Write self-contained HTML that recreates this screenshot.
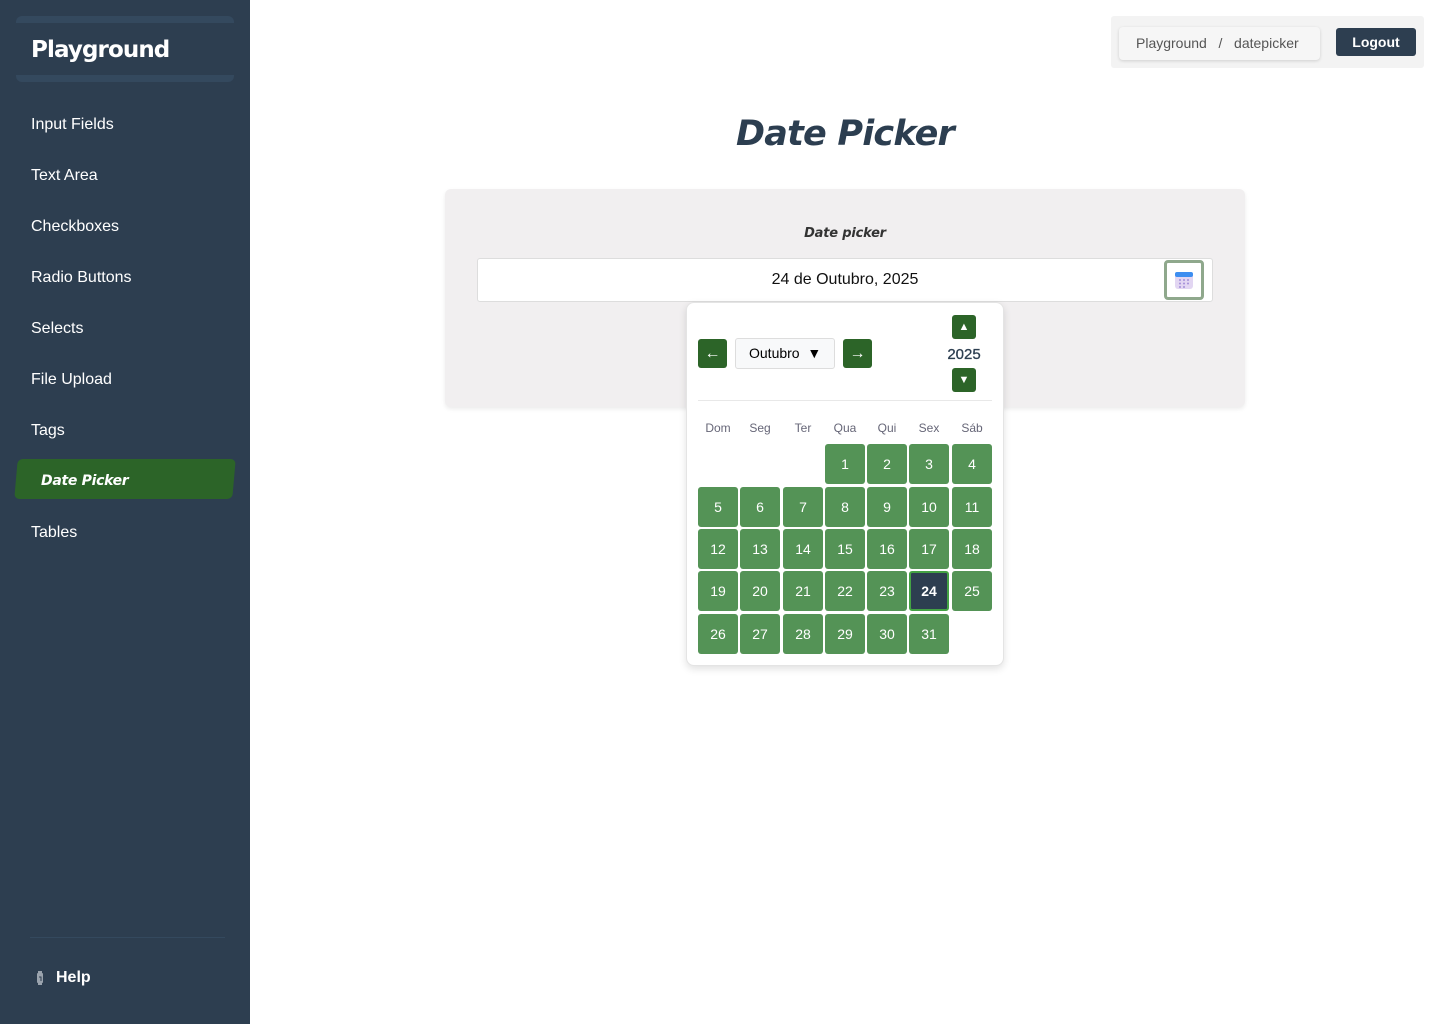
<!DOCTYPE html>
<html><head><meta charset="utf-8"><style>
*{box-sizing:border-box;margin:0;padding:0}
body{width:1440px;height:1024px;font-family:"Liberation Sans",sans-serif;background:#fff;position:relative;overflow:hidden}
.sb{position:absolute;left:0;top:0;width:250px;height:1024px;background:#2d3e50}
.logo{position:absolute;left:16px;top:16px;width:218px;height:66px;border-top:7px solid #34495e;border-bottom:7px solid #34495e;border-radius:6px;color:#fff;font:bold 23px "DejaVu Sans",sans-serif;padding:14px 0 0 15px;letter-spacing:-0.9px}
.nav{position:absolute;left:31px;color:#fff;font-size:16px;margin-top:1px}
.act{position:absolute;left:16px;top:459px;width:218px;height:40px;background:#2c6428;border-radius:5px;transform:skewX(-5deg)}
.actt{position:absolute;left:41px;top:473px;color:#fff;font:italic bold 14px "DejaVu Sans",sans-serif;letter-spacing:-0.3px}
.hr{position:absolute;left:30px;top:937px;width:195px;height:1px;background:#34495e}
.help{position:absolute;left:56px;top:969px;color:#fff;font-weight:bold;font-size:16px}
.bc{position:absolute;left:1111px;top:16px;width:313px;height:52px;background:#f3f3f3;border-radius:3px}
.bci{position:absolute;left:1119px;top:27px;width:201px;height:33px;background:#f6f6f6;border-radius:4px;box-shadow:0 1px 3px rgba(0,0,0,.15);font-size:14px;color:#555;padding:8px 0 0 17px}
.lo{position:absolute;left:1336px;top:28px;width:80px;height:28px;background:#2d3e50;border-radius:3px;color:#fff;font-size:14px;font-weight:bold;text-align:center;line-height:28px}
h1{position:absolute;left:0;width:1690px;top:114px;text-align:center;font:italic bold 35px "DejaVu Sans",sans-serif;color:#2c3e50;letter-spacing:-0.8px}
.card{position:absolute;left:445px;top:189px;width:800px;height:218px;background:#f1eff0;border-radius:6px;box-shadow:0 2px 4px rgba(0,0,0,.08)}
.lbl{position:absolute;left:445px;width:800px;top:226px;text-align:center;font:italic bold 13px "DejaVu Sans",sans-serif;color:#333;letter-spacing:-0.2px}
.inp{position:absolute;left:477px;top:258px;width:736px;height:44px;background:#fff;border:1px solid #ddd;border-radius:3px;font-size:16px;text-align:center;line-height:42px;color:#111}
.cal{position:absolute;left:1164px;top:260px;width:40px;height:40px;border:3px solid #8fa88c;border-radius:4px;background:#fff}
.pop{position:absolute;left:686px;top:302px;width:318px;height:364px;background:#fff;border:1px solid #e4e4e4;border-radius:8px;box-shadow:0 3px 8px rgba(0,0,0,.12)}
.btn{position:absolute;background:#2c6428;color:#fff;border-radius:3px;text-align:center}
.sel{position:absolute;left:735px;top:338px;width:100px;height:31px;border:1px solid #ddd;border-radius:3px;background:#f8f9fa;font-size:14px;line-height:29px;padding-left:13px}
.yr{position:absolute;left:930px;top:346px;width:68px;text-align:center;font-size:15px;color:#2c3e50;-webkit-text-stroke:0.3px #2c3e50}
.sep{position:absolute;left:698px;top:400px;width:294px;height:1px;background:#e8e8e8}
.dn{position:absolute;top:421px;width:40px;text-align:center;font-size:12px;color:#667}
.d{position:absolute;width:40px;height:40px;background:#549356;border-radius:3px;color:#fff;font-size:14px;text-align:center;line-height:40px}
.d.s{background:#2d3e50;border:2px solid #44a244;font-weight:bold;line-height:36px}
</style></head><body>
<div class="sb">
<div class="logo">Playground</div>
<div class="nav" style="top:115px">Input Fields</div>
<div class="nav" style="top:166px">Text Area</div>
<div class="nav" style="top:217px">Checkboxes</div>
<div class="nav" style="top:268px">Radio Buttons</div>
<div class="nav" style="top:319px">Selects</div>
<div class="nav" style="top:370px">File Upload</div>
<div class="nav" style="top:421px">Tags</div>
<div class="act"></div><div class="actt">Date Picker</div>
<div class="nav" style="top:523px">Tables</div>
<div class="hr"></div>
<svg style="position:absolute;left:35px;top:970px" width="10" height="16" viewBox="0 0 10 16"><rect x="2" y="3" width="6" height="10" rx="1" fill="#9aa3ad"/><rect x="3" y="1" width="4" height="3" fill="#9aa3ad"/><rect x="3" y="13" width="4" height="2" fill="#9aa3ad"/><path d="M4 7h2v4" stroke="#2d3e50" fill="none"/></svg>
<div class="help">Help</div>
</div>
<div class="bc"></div>
<div class="bci">Playground &nbsp;&nbsp;/&nbsp;&nbsp; datepicker</div>
<div class="lo">Logout</div>
<h1>Date Picker</h1>
<div class="card"></div>
<div class="lbl">Date picker</div>
<div class="inp">24 de Outubro, 2025</div>
<div class="cal"><svg style="position:absolute;left:7px;top:7px" width="20" height="20" viewBox="0 0 20 20"><rect x="1" y="2" width="18" height="17" rx="3" fill="#e2d6f2"/><rect x="1" y="2" width="18" height="5" rx="2" fill="#3d8ef0"/><g fill="#a38fd8"><circle cx="6" cy="10" r="1"/><circle cx="10" cy="10" r="1"/><circle cx="14" cy="10" r="1"/><circle cx="6" cy="13.5" r="1"/><circle cx="10" cy="13.5" r="1"/><circle cx="14" cy="13.5" r="1"/><circle cx="6" cy="17" r="1"/><circle cx="10" cy="17" r="1"/></g></svg></div>
<div class="pop"></div>
<div class="btn" style="left:698px;top:339px;width:29px;height:29px;line-height:29px;font-size:16px">&larr;</div>
<div class="sel">Outubro &nbsp;▼</div>
<div class="btn" style="left:843px;top:339px;width:29px;height:29px;line-height:29px;font-size:16px">&rarr;</div>
<div class="btn" style="left:952px;top:315px;width:24px;height:24px;line-height:24px;font-size:11px">▲</div>
<div class="yr">2025</div>
<div class="btn" style="left:952px;top:368px;width:24px;height:24px;line-height:24px;font-size:11px">▼</div>
<div class="sep"></div>
<div class="dn" style="left:698px">Dom</div><div class="dn" style="left:740px">Seg</div><div class="dn" style="left:783px">Ter</div><div class="dn" style="left:825px">Qua</div><div class="dn" style="left:867px">Qui</div><div class="dn" style="left:909px">Sex</div><div class="dn" style="left:952px">Sáb</div>
<div class="d" style="left:825px;top:444px">1</div><div class="d" style="left:867px;top:444px">2</div><div class="d" style="left:909px;top:444px">3</div><div class="d" style="left:952px;top:444px">4</div>
<div class="d" style="left:698px;top:487px">5</div><div class="d" style="left:740px;top:487px">6</div><div class="d" style="left:783px;top:487px">7</div><div class="d" style="left:825px;top:487px">8</div><div class="d" style="left:867px;top:487px">9</div><div class="d" style="left:909px;top:487px">10</div><div class="d" style="left:952px;top:487px">11</div>
<div class="d" style="left:698px;top:529px">12</div><div class="d" style="left:740px;top:529px">13</div><div class="d" style="left:783px;top:529px">14</div><div class="d" style="left:825px;top:529px">15</div><div class="d" style="left:867px;top:529px">16</div><div class="d" style="left:909px;top:529px">17</div><div class="d" style="left:952px;top:529px">18</div>
<div class="d" style="left:698px;top:571px">19</div><div class="d" style="left:740px;top:571px">20</div><div class="d" style="left:783px;top:571px">21</div><div class="d" style="left:825px;top:571px">22</div><div class="d" style="left:867px;top:571px">23</div><div class="d s" style="left:909px;top:571px">24</div><div class="d" style="left:952px;top:571px">25</div>
<div class="d" style="left:698px;top:614px">26</div><div class="d" style="left:740px;top:614px">27</div><div class="d" style="left:783px;top:614px">28</div><div class="d" style="left:825px;top:614px">29</div><div class="d" style="left:867px;top:614px">30</div><div class="d" style="left:909px;top:614px">31</div>
</body></html>
